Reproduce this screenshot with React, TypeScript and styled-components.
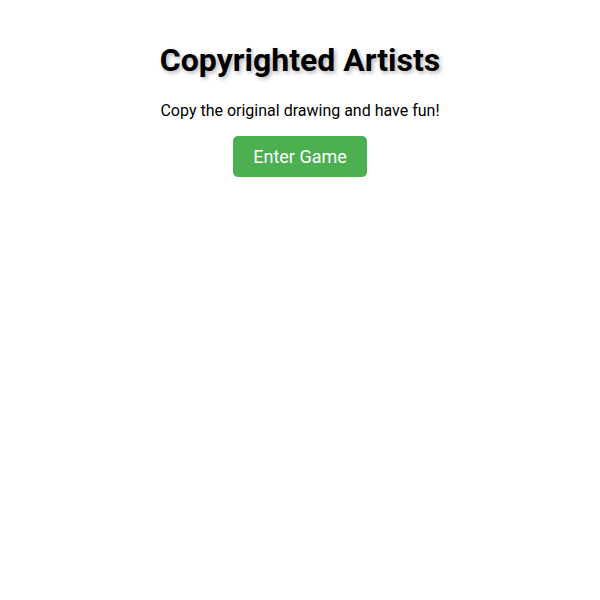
import styled, { createGlobalStyle } from 'styled-components';

const GlobalStyle = createGlobalStyle`
  body {
    margin: 0;
    font-family: Roboto, "Liberation Sans", sans-serif;
    background: #ffffff;
    color: #000;
  }
`;

const Landing = styled.div`
  display: flex;
  flex-direction: column;
  align-items: center;
  text-align: center;
  padding: 20px;
`;

const Title = styled.h1`
  font-size: 32px;
  font-weight: 700;
  margin: 21.44px 0;
  text-shadow: 2px 2px 4px rgba(0, 0, 0, 0.3);
`;

const Tagline = styled.p`
  font-size: 16px;
  margin: 0 0 16px;
`;

const EnterButton = styled.button`
  font-family: inherit;
  font-size: 18px;
  color: #fff;
  background-color: #4caf50;
  border: none;
  border-radius: 5px;
  padding: 10px 20px;
  cursor: pointer;

  &:hover {
    background-color: #45a049;
  }
`;

const App = () => {
  return (
    <>
      <GlobalStyle />
      <Landing>
        <Title>Copyrighted Artists</Title>
        <Tagline>Copy the original drawing and have fun!</Tagline>
        <EnterButton>Enter Game</EnterButton>
      </Landing>
    </>
  );
};

export default App;
